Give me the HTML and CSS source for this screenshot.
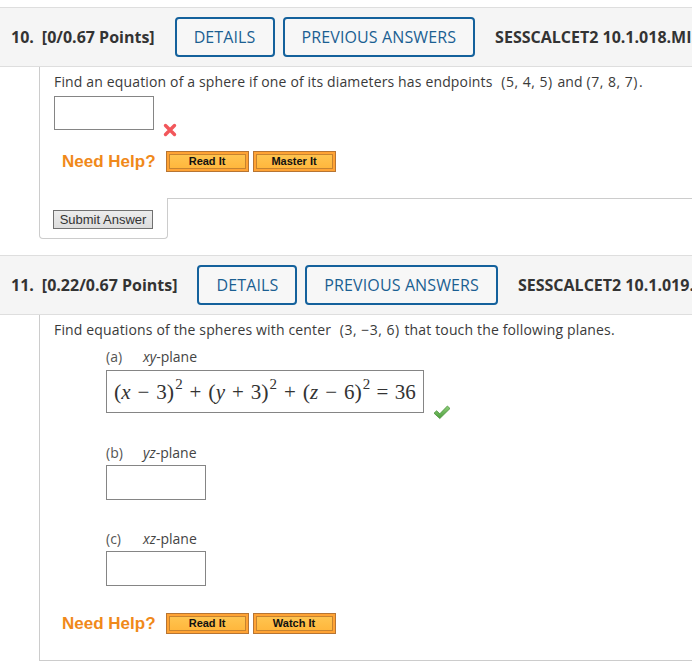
FILE: index.html
```html
<!DOCTYPE html>
<html>
<head>
<meta charset="utf-8">
<link rel="stylesheet" href="styles.css">
</head>
<body>
<div class="page">
  <section class="question q10">
    <div class="qhead">
      <span class="qnum">10.</span>
      <span class="qpts">[0/0.67 Points]</span>
      <span class="hbtn">DETAILS</span>
      <span class="hbtn hbtn-prev">PREVIOUS ANSWERS</span>
      <span class="qcode">SESSCALCET2 10.1.018.MI.</span>
    </div>
    <div class="qbody body10">
      <p class="qtext">Find an equation of a sphere if one of its diameters has endpoints <span class="pt">(5, 4, 5)</span> and <span class="pt pt2">(7, 8, 7)</span>.</p>
      <div class="ansrow row10">
        <div class="ansbox box10"></div>
        <svg class="mark xmark" width="14" height="14" viewBox="0 0 14 14"><path d="M2.5 2.5 L11.5 11.5 M11.5 2.5 L2.5 11.5" stroke="#f2575b" stroke-width="3.4" stroke-linecap="round"/></svg>
      </div>
      <div class="help help10">
        <span class="needhelp">Need Help?</span>
        <span class="obtn"><span>Read It</span></span>
        <span class="obtn"><span>Master It</span></span>
      </div>
    </div>
    <div class="submitrow">
      <div class="tab"><button class="submit">Submit Answer</button></div>
      <div class="fill"></div>
    </div>
  </section>

  <section class="question q11">
    <div class="qhead">
      <span class="qnum">11.</span>
      <span class="qpts">[0.22/0.67 Points]</span>
      <span class="hbtn">DETAILS</span>
      <span class="hbtn hbtn-prev">PREVIOUS ANSWERS</span>
      <span class="qcode">SESSCALCET2 10.1.019.</span>
    </div>
    <div class="qbody body11">
      <p class="qtext">Find equations of the spheres with center <span class="pt">(3, &minus;3, 6)</span> that touch the following planes.</p>
      <div class="part part-a">
        <div class="plabel"><span class="pl">(a)</span><span class="pn"><i>xy</i>-plane</span></div>
        <div class="ansrow">
          <div class="ansbox mathbox">
            <span class="math"><span class="mp">(</span><i>x</i><span class="op">&minus;</span>3<span class="mp">)</span><sup>2</sup><span class="op">+</span><span class="mp">(</span><i>y</i><span class="op">+</span>3<span class="mp">)</span><sup>2</sup><span class="op">+</span><span class="mp">(</span><i>z</i><span class="op">&minus;</span>6<span class="mp">)</span><sup>2</sup><span class="op eq">=</span>36</span>
          </div>
          <svg class="mark check" width="18" height="15" viewBox="0 0 18 15"><defs><linearGradient id="g" x1="0" y1="0" x2="0" y2="1"><stop offset="0" stop-color="#8fd07a"/><stop offset="1" stop-color="#4c9e3c"/></linearGradient></defs><path d="M1 8.2 L3.6 5.8 L6.8 8.8 L14.4 1 L17 3.5 L6.8 13.6 Z" fill="url(#g)" stroke="#4a8f3a" stroke-width="0.8" stroke-linejoin="round"/></svg>
        </div>
      </div>
      <div class="part part-b">
        <div class="plabel"><span class="pl">(b)</span><span class="pn"><i>yz</i>-plane</span></div>
        <div class="ansbox smallbox"></div>
      </div>
      <div class="part part-c">
        <div class="plabel"><span class="pl">(c)</span><span class="pn"><i>xz</i>-plane</span></div>
        <div class="ansbox smallbox"></div>
      </div>
      <div class="help help11">
        <span class="needhelp">Need Help?</span>
        <span class="obtn"><span>Read It</span></span>
        <span class="obtn"><span>Watch It</span></span>
      </div>
    </div>
  </section>
</div>
</body>
</html>
```

FILE: styles.css
```css
* { box-sizing: border-box; }
html, body { margin: 0; padding: 0; background: #fff; }
body {
  font-family: "Open Sans", "Noto Sans", sans-serif;
  color: #333;
  overflow: hidden;
}
.page { padding-top: 7px; }

.qhead {
  height: 60px;
  display: flex;
  align-items: center;
  padding-left: 11px;
  background: #f5f5f5;
  border-top: 1px solid #dedede;
  border-bottom: 1px solid #dedede;
  white-space: nowrap;
  overflow: hidden;
  font-size: 16px;
}
.qnum { font-weight: 700; color: #333; }
.qpts { font-weight: 700; color: #333; margin-left: 8px; }
.hbtn {
  margin-left: 20px;
  height: 40px;
  display: flex;
  align-items: center;
  padding: 0 17px;
  border: 2px solid #14619c;
  border-radius: 4px;
  color: #1b5f92;
  font-weight: 400;
  letter-spacing: 0.12px;
  background: #f7f7f7;
}
.hbtn-prev { margin-left: 8px; }
.qcode { margin-left: 20px; font-weight: 700; color: #333; }

.qbody {
  margin-left: 39px;
  border-left: 1px solid #cccccc;
  padding-left: 14px;
}
.qtext {
  margin: 0;
  font-size: 14px;
  line-height: 18px;
  color: #3a3a3a;
  letter-spacing: 0.15px;
  white-space: nowrap;
}
.pt { margin: 0 1px 0 5px; letter-spacing: 0.5px; }
.pt2 { margin-left: 0; }

.body10 { padding-top: 6px; padding-bottom: 26px; }
.ansrow { display: flex; align-items: flex-end; }
.row10 { margin-top: 5px; }
.ansbox { border: 1px solid #858585; background: #fff; }
.box10 { width: 100px; height: 34px; }
.mark { display: block; margin-left: 9px; }
.xmark { margin-bottom: -7px; }

.help { display: flex; align-items: center; padding-left: 8px; height: 21px; }
.help10 { margin-top: 21px; }
.needhelp {
  font-family: "Liberation Sans", Arial, sans-serif;
  font-weight: 700;
  font-size: 17px;
  color: #f0891a;
  margin-right: 10px;
}
.obtn {
  display: flex;
  width: 83px;
  height: 21px;
  padding: 2px;
  border: 1px solid #b77533;
  background: #ffa334;
  margin-right: 4px;
}
.obtn span {
  flex: 1;
  border: 1px solid #c7832f;
  background: linear-gradient(#ffc44f, #ffb73d);
  font-family: "Liberation Sans", Arial, sans-serif;
  font-weight: 700;
  font-size: 11px;
  line-height: 13px;
  text-align: center;
  color: #111;
}

.submitrow { display: flex; }
.tab {
  margin-left: 39px;
  width: 129px;
  border-left: 1px solid #cccccc;
  border-right: 1px solid #cccccc;
  border-bottom: 1px solid #cccccc;
  border-radius: 0 0 4px 4px;
  padding: 12px 0 9px 13px;
}
.fill { flex: 1; border-top: 1px solid #cccccc; }
.submit {
  display: block;
  width: 100px;
  height: 19px;
  padding: 0;
  margin: 0;
  border: 1px solid #707070;
  background: linear-gradient(#ececec, #dddddd);
  font-family: "Liberation Sans", Arial, sans-serif;
  font-size: 13px;
  line-height: 17px;
  color: #333;
}

.q11 { margin-top: 16px; }
.body11 {
  padding-top: 6px;
  padding-bottom: 26px;
  border-bottom: 1px solid #cccccc;
}
.part { margin-left: 52px; }
.plabel {
  font-size: 14px;
  line-height: 18px;
  color: #444;
  display: flex;
}
.pl { color: #555; width: 37px; }
.pn i { font-style: italic; }
.part-a { margin-top: 9px; }
.part-a .ansrow { margin-top: 4px; }
.mathbox {
  width: 318px;
  height: 43px;
  display: flex;
  align-items: center;
  padding-left: 7px;
}
.math {
  font-family: "Liberation Serif", "Times New Roman", serif;
  font-size: 21px;
  color: #333;
  white-space: nowrap;
  line-height: 1;
}
.math i { font-style: italic; }
.math .mp { font-size: 22px; }
.math sup { font-size: 15px; vertical-align: 0; position: relative; top: -10px; margin-left: 1px; }
.math .op { margin: 0 0.33em; }
.math .eq { margin: 0 0.3em 0 0.3em; }
.check { margin-bottom: -7px; }

.part-b { margin-top: 31px; }
.part-c { margin-top: 30px; }
.smallbox { width: 100px; height: 35px; margin-top: 3px; }
.help11 { margin-top: 27px; }
```
